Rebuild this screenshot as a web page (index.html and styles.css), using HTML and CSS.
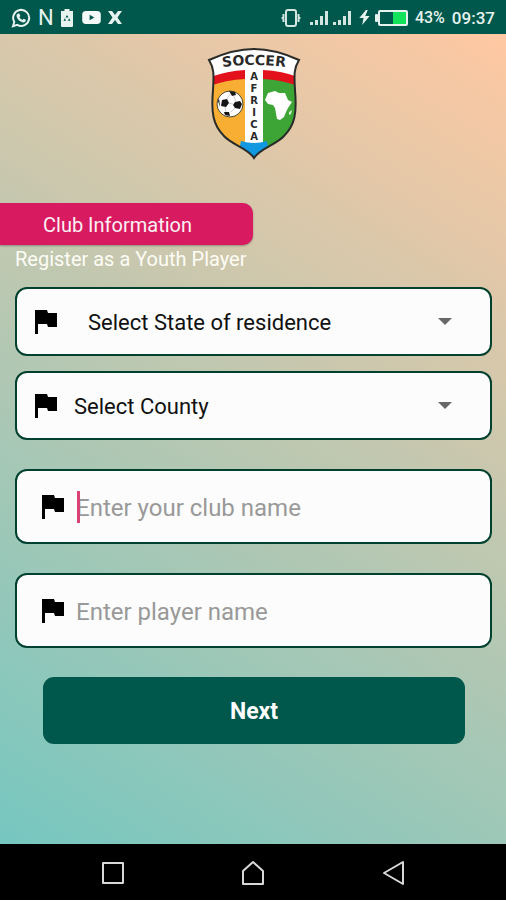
FILE: index.html
```html
<!doctype html>
<html lang="en">

<head>
  <meta charset="utf-8">
  <title>Club Information</title>
  <meta name="viewport" content="width=device-width, initial-scale=1">
  <link rel="stylesheet" href="styles.css">
</head>

<body>
  <header class="status-bar">
    <div class="status-left">
      <svg width="20" height="20" viewBox="0 0 20 20">
        <path d="M2 18.300l1.300-4.300a8 8 0 1 1 3 2.900z" fill="none" stroke="#e6f3ef" stroke-width="2"/>
        <path d="M7 5.500l1.500 .2.900 2.200-1 1.200c.7 1.400 1.600 2.200 3 2.800l1.200-1.200 2.200 1.100c.1 1.700-1 2.600-2.600 2.600-3.400-.4-6.200-3.300-6.700-6.300 0-1.100.5-2.200 1.500-2.600z" fill="#e6f3ef"/>
      </svg>
      <span class="status-n">N</span>
      <svg class="icon-recycle" width="12" height="18" viewBox="0 0 12 18">
        <path d="M3.500 0h5v2H12v15a1 1 0 0 1-1 1H1a1 1 0 0 1-1-1V2h3.500z" fill="#e6f3ef"/>
        <path d="M6 6l1.500 2.500h-3zM3.800 9.200l1.400 2.600H2.500zM8.200 9.200l1.300 2.600H6.800z" fill="#00574b"/>
      </svg>
      <svg width="19" height="13" viewBox="0 0 20 14">
        <rect width="20" height="14" rx="4" fill="#f4faf8"/>
        <path d="M8 4l5 3-5 3z" fill="#00574b"/>
      </svg>
      <svg width="14" height="13" viewBox="0 0 14 13">
        <path d="M0 0h4l3 4 3-4h4L9.500 6.500 14 13h-4L7 9l-3 4H0l4.500-6.500z" fill="#e6f3ef"/>
      </svg>
    </div>
    <div class="status-right">
      <svg class="icon-vibrate" width="20" height="18" viewBox="0 0 20 18">
        <rect x="5" y="1" width="10" height="16" rx="2" fill="none" stroke="#d5e6e1" stroke-width="2"/>
        <path d="M2.500 5v3l-1 1 1 1v3M17.500 5v3l1 1-1 1v3" fill="none" stroke="#d5e6e1" stroke-width="2"/>
      </svg>
      <svg width="42" height="14" viewBox="0 0 42 14">
        <path d="M0 11h3v3H0zM5 9h3v5H5zM10 5h3v9h-3zM15 0h3v14h-3zM23 11h3v3h-3zM28 9h3v5h-3zM33 5h3v9h-3zM38 0h3v14h-3z" fill="#d5e6e1"/>
      </svg>
      <svg class="icon-bolt" width="11" height="15" viewBox="0 0 11 16">
        <path d="M7 0L0 8.500h4.500L3 16l8-9.500H6.300L9 0z" fill="#e6f3ef"/>
      </svg>
      <svg width="33" height="16" viewBox="0 0 33 16">
        <rect x="4" y="1" width="28" height="14" rx="1" fill="none" stroke="#e6f3ef" stroke-width="2"/>
        <rect x="0" y="4" width="3" height="8" rx="1" fill="#e6f3ef"/>
        <rect x="18" y="2" width="13" height="12" fill="#12e35b"/>
      </svg>
      <span class="battery-level">43%</span>
      <span class="clock">09:37</span>
    </div>
  </header>

  <main class="screen">
    <svg class="crest" width="94" height="114" viewBox="0 0 94 114" role="img" aria-label="Soccer Africa">
      <defs>
        <path id="shield" d="M2 13C13 8 30 2 47 2s34 6 45 11c-5 8-5 14-4 30 2 23 0 35-11 46-8 9-24 12-30 22-6-10-22-13-30-22C6 78 4 66 6 43 7 27 7 21 2 13z"/>
        <clipPath id="shield-clip"><use href="#shield"/></clipPath>
        <path id="banner" d="M9 21Q47 15 85 21"/>
      </defs>
      <g clip-path="url(#shield-clip)">
        <rect width="94" height="114" fill="#fff"/>
        <path d="M0 40Q20 32 38 31v83H0z" fill="#f7ae32"/>
        <path d="M56 31q20 1 38 9v74H56z" fill="#3da535"/>
        <path d="M0 31q20-7 38-8v9q-20 1-38 8zM56 23q20 1 38 8v9q-18-7-38-8z" fill="#e2111b"/>
        <path d="M34 94q13 4 26 0l3 20H30z" fill="#1298e0"/>
      </g>
      <use href="#shield" fill="none" stroke="#292c29" stroke-width="2"/>
      <text class="crest-name"><textPath href="#banner" startOffset="50%" text-anchor="middle">SOCCER</textPath></text>
      <text class="crest-name crest-column" text-anchor="middle"><tspan x="47" y="33">A</tspan><tspan x="47" y="45">F</tspan><tspan x="47" y="57">R</tspan><tspan x="47" y="69">I</tspan><tspan x="47" y="81">C</tspan><tspan x="47" y="93">A</tspan></text>
      <!-- ball -->
      <circle cx="23" cy="57" r="13" fill="#fff" stroke="#4b4630" stroke-width="1"/>
      <g fill="#161616">
        <path d="M15 53l5-1 2 4-3 4-5-1zM28 55l5-1 2 3-2 5-5-1-2-3zM22 44l6 1 1 3-4 1zM17 65l5 0 1 4-5-1zM11 54l1-3 1 9z"/>
      </g>
      <path d="M22 56l4 1M18 60l1 5M28 61l-4 4M27 49l2 6M20 52l3-5" fill="none" stroke="#ccc" stroke-width="1"/>
      <!-- africa -->
      <path d="M61 46l7-2 4 2 6 0 3 7 4 2-4 6-2 4-2 5-4 3-3-1-2-11-2-3-5-1-3-4z" fill="#fff"/>
      <path d="M82 65l3-2-1 4-2 1z" fill="#d7ead2"/>
    </svg>

    <h1 class="section-tag">Club Information</h1>
    <p class="subtitle">Register as a Youth Player</p>

    <form class="club-form">
      <div class="field field-select">
        <label for="state" aria-label="State of residence">
          <svg class="flag" width="22" height="24" viewBox="0 0 22 24"><path d="M0 0h12l1 3h9v14H13l-1-3H3v10H0z"/></svg>
        </label>
        <select id="state" class="select-state">
          <option>Select State of residence</option>
        </select>
        <svg class="arrow" width="14" height="7" viewBox="0 0 14 7"><path d="M0 0h14L7 7z"/></svg>
      </div>

      <div class="field field-select">
        <label for="county" aria-label="County">
          <svg class="flag" width="22" height="24" viewBox="0 0 22 24"><path d="M0 0h12l1 3h9v14H13l-1-3H3v10H0z"/></svg>
        </label>
        <select id="county">
          <option>Select County</option>
        </select>
        <svg class="arrow" width="14" height="7" viewBox="0 0 14 7"><path d="M0 0h14L7 7z"/></svg>
      </div>

      <div class="field field-input">
        <label for="club-name" aria-label="Club name">
          <svg class="flag" width="22" height="24" viewBox="0 0 22 24"><path d="M0 0h12l1 3h9v14H13l-1-3H3v10H0z"/></svg>
        </label>
        <input type="text" id="club-name" placeholder="Enter your club name">
        <span class="caret"></span>
      </div>

      <div class="field field-input">
        <label for="player-name" aria-label="Player name">
          <svg class="flag" width="22" height="24" viewBox="0 0 22 24"><path d="M0 0h12l1 3h9v14H13l-1-3H3v10H0z"/></svg>
        </label>
        <input type="text" id="player-name" placeholder="Enter player name">
      </div>

      <button type="submit" class="next">Next</button>
    </form>
  </main>

  <nav class="nav-bar">
    <button type="button" aria-label="Recent apps">
      <svg width="24" height="26" viewBox="0 0 24 26"><path d="M2 3h20v20H2z"/></svg>
    </button>
    <button type="button" aria-label="Home">
      <svg width="24" height="26" viewBox="0 0 24 26"><path d="M2 11L12 2l10 9v13H2z"/></svg>
    </button>
    <button type="button" aria-label="Back">
      <svg width="24" height="26" viewBox="0 0 24 26"><path d="M22 2v22L3 13z"/></svg>
    </button>
  </nav>
</body>
</html>
```

FILE: styles.css
```css
* {
  box-sizing: border-box;
}
body {
  display: flex;
  flex-direction: column;
  min-height: 100vh;
  margin: 0;
  font-family: Roboto, "Liberation Sans", sans-serif;
}
svg {
  display: block;
  flex: none;
}

/* status bar */
.status-bar {
  display: flex;
  justify-content: space-between;
  align-items: center;
  height: 34px;
  padding: 1px 11px 0;
  background-color: #00574b;
  color: #e6f3ef;
}
.status-left, .status-right {
  display: flex;
  align-items: center;
}
.status-left {
  gap: 7px;
}
.status-n {
  width: 14px;
  font-size: 22px;
  line-height: 24px;
  text-align: center;
}
.icon-recycle {
  margin: 0 2px;
}
.icon-vibrate {
  margin-right: 9px;
}
.icon-bolt {
  margin: 0 5px 0 7px;
}
.battery-level {
  margin: 0 7px;
  font-size: 16px;
  font-weight: 500;
}
.clock {
  font-size: 17px;
  font-weight: 500;
}

/* form screen */
.screen {
  flex: 1;
  padding: 13px 14px 24px 15px;
  background: linear-gradient(32deg, #76c7c0, #ffc8a2);
}
.crest {
  margin: 0 auto 42px;
}
.crest-name {
  font-family: "DejaVu Sans", sans-serif;
  font-size: 14px;
  font-weight: bold;
  fill: #292929;
}
.crest-column {
  font-size: 10px;
}
.section-tag {
  width: 53%;
  margin: 0 0 0 -15px;
  padding: 2px 0 0 43px;
  border-radius: 0 10px 10px 0;
  background-color: #d81b60;
  box-shadow: 0 1px 2px rgba(0, 0, 0, .3);
  color: #fdeff4;
  font-size: 20px;
  font-weight: 400;
  line-height: 40px;
}
.subtitle {
  margin: 2px 0 16px;
  color: #fdfcf5;
  font-size: 20px;
  line-height: 24px;
}
.field {
  position: relative;
  display: flex;
  align-items: center;
  border: 2px solid #00402f;
  border-radius: 12px;
  background-color: #fbfcfb;
}
.field-select {
  height: 69px;
  margin-bottom: 15px;
  padding-left: 18px;
}
.field-input {
  height: 75px;
  margin: 29px 0;
  padding-left: 25px;
}
.flag {
  fill: #000;
}
.field select, .field input {
  flex: 1;
  min-width: 0;
  height: 100%;
  border: 0;
  outline: 0;
  background: none;
  color: #111;
  font-family: inherit;
}
.field select {
  appearance: none;
  padding: 1px 60px 0 17px;
  font-size: 22px;
}
.field .select-state {
  padding-left: 31px;
}
.field input {
  padding: 2px 20px 0 12px;
  font-size: 24px;
}
.field input::placeholder {
  color: #999;
  opacity: 1;
}
.arrow {
  position: absolute;
  right: 38px;
  fill: #686868;
  pointer-events: none;
}
.caret {
  position: absolute;
  left: 60px;
  width: 3px;
  height: 32px;
  background-color: #d94376;
}
.next {
  display: block;
  width: calc(100% - 55px);
  height: 67px;
  margin: 0 28px;
  padding: 2px 0 0;
  border: 0;
  border-radius: 11px;
  background-color: #00574b;
  color: #fff;
  font-family: inherit;
  font-size: 23px;
  font-weight: 700;
}

/* navigation bar */
.nav-bar {
  display: flex;
  justify-content: center;
  gap: 23%;
  height: 56px;
  padding-top: 1px;
  background-color: #000;
}
.nav-bar button {
  padding: 0;
  border: 0;
  background: none;
}
.nav-bar path {
  fill: none;
  stroke: #d8d8d8;
  stroke-width: 2;
  stroke-linejoin: round;
}
```
